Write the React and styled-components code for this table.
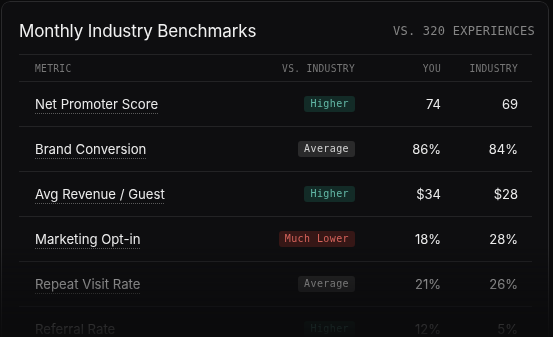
import React from "react";
import styled, { createGlobalStyle } from "styled-components";

const Global = createGlobalStyle`
  html, body { margin: 0; padding: 0; background: #0b0b0c; overflow: hidden; }
  body { padding: 1px 0 0 1px; font-family: Inter, "Noto Sans", sans-serif; -webkit-font-smoothing: antialiased; }
`;

const Card = styled.section`
  width: 548px;
  height: 336px;
  overflow: hidden;
  box-sizing: border-box;
  background: #0e0e10;
  border: 1px solid #2a2a2c;
  border-bottom: none;
  border-radius: 9px 9px 0 0;
  padding: 16px 16px 0 17px;
  -webkit-mask-image: linear-gradient(to bottom, #000 0px, #000 245px, rgba(0,0,0,0.5) 285px, rgba(0,0,0,0.1) 330px, rgba(0,0,0,0.05) 336px);
  mask-image: linear-gradient(to bottom, #000 0px, #000 245px, rgba(0,0,0,0.5) 285px, rgba(0,0,0,0.1) 330px, rgba(0,0,0,0.05) 336px);
`;

const Header = styled.header`
  display: flex;
  align-items: center;
  justify-content: space-between;
  height: 26px;
  margin-bottom: 10px;
`;

const Title = styled.h2`
  margin: 0;
  font-size: 17px;
  font-weight: 400;
  color: #f2f2f2;
  letter-spacing: -0.12px;
`;

const Sub = styled.span`
  font-family: "DejaVu Sans Mono", "Liberation Mono", monospace;
  font-size: 12px;
  color: #858585;
  letter-spacing: 0.25px;
  margin-right: -3px;
`;

const Row = styled.div`
  display: grid;
  grid-template-columns: 1fr 121px 86px 77px;
  align-items: center;
  padding: 0 14px 0 16px;
  height: ${(p) => (p.$head ? "26px" : "44px")};
  border-top: 1px solid #232325;
`;

const HeadCell = styled.div`
  font-family: "DejaVu Sans Mono", "Liberation Mono", monospace;
  font-size: 9.6px;
  color: #767676;
  letter-spacing: 0.3px;
  text-align: ${(p) => (p.$left ? "left" : "right")};
`;

const Metric = styled.span`
  font-size: 13.2px;
  color: #ececec;
  text-decoration: underline dotted #5a5a5a;
  text-decoration-thickness: 1px;
  text-underline-offset: 4px;
  justify-self: start;
`;

const badgeColors = {
  Higher: { bg: "#132b27", fg: "#63b8a7" },
  Average: { bg: "#2a2a2b", fg: "#d2d2d2" },
  "Much Lower": { bg: "#361716", fg: "#d5635b" },
};

const Badge = styled.span`
  justify-self: end;
  font-family: "DejaVu Sans Mono", "Liberation Mono", monospace;
  font-size: 10px;
  letter-spacing: 0.4px;
  line-height: 16px;
  height: 16px;
  padding: 0 6px;
  border-radius: 3px;
  background: ${(p) => badgeColors[p.$kind].bg};
  color: ${(p) => badgeColors[p.$kind].fg};
`;

const Value = styled.span`
  text-align: right;
  font-size: 13px;
  color: #ececec;
`;

const rows = [
  ["Net Promoter Score", "Higher", "74", "69"],
  ["Brand Conversion", "Average", "86%", "84%"],
  ["Avg Revenue / Guest", "Higher", "$34", "$28"],
  ["Marketing Opt-in", "Much Lower", "18%", "28%"],
  ["Repeat Visit Rate", "Average", "21%", "26%"],
  ["Referral Rate", "Higher", "12%", "5%"],
];

export default function App() {
  return (
    <>
      <Global />
      <Card>
        <Header>
          <Title>Monthly Industry Benchmarks</Title>
          <Sub>VS. 320 EXPERIENCES</Sub>
        </Header>
        <div>
          <Row $head>
            <HeadCell $left>METRIC</HeadCell>
            <HeadCell>VS. INDUSTRY</HeadCell>
            <HeadCell>YOU</HeadCell>
            <HeadCell>INDUSTRY</HeadCell>
          </Row>
          {rows.map(([m, b, y, i]) => (
            <Row key={m}>
              <Metric>{m}</Metric>
              <Badge $kind={b}>{b}</Badge>
              <Value>{y}</Value>
              <Value>{i}</Value>
            </Row>
          ))}
        </div>
      </Card>
    </>
  );
}
